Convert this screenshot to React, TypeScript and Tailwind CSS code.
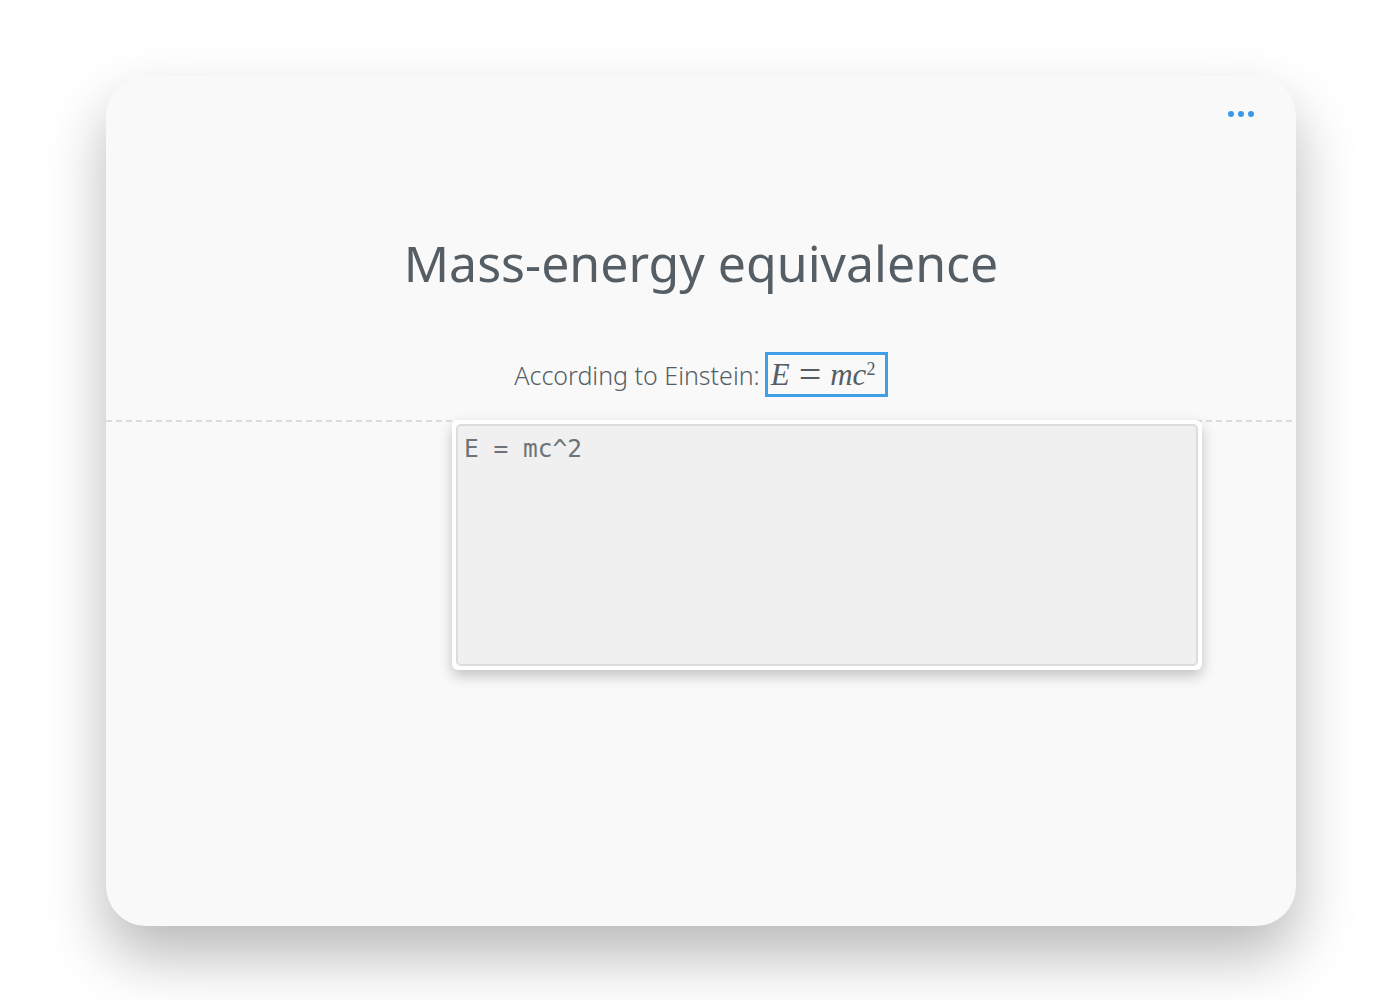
export default function App() {
  return (
    <div className="min-h-[1000px] bg-white pt-[76px]" style={{ fontFamily: '"Noto Sans", "Open Sans", sans-serif' }}>
      <div className="relative ml-[106px] h-[850px] w-[1190px] rounded-[40px] bg-[#f9f9f9] shadow-[0_30px_60px_rgba(0,0,0,0.28)]">
        {/* menu dots */}
        <button className="absolute right-[38px] top-[26px] flex h-6 items-center gap-[4px] px-1">
          <span className="h-[6px] w-[6px] rounded-full bg-[#3b99e8]" />
          <span className="h-[6px] w-[6px] rounded-full bg-[#3b99e8]" />
          <span className="h-[6px] w-[6px] rounded-full bg-[#3b99e8]" />
        </button>

        <div className="flex flex-col items-center pt-[152px]">
          <h1 className="text-[50px] font-normal leading-[70px] text-[#555e65]">Mass-energy equivalence</h1>
          <p className="mt-[54px] flex items-center text-[25px] font-light leading-[32px] text-[#555e65]">
            <span>According to Einstein:</span>
            <span
              className="ml-[5px] flex h-[45px] w-[123px] items-center border-[3px] border-[#3f9ee8] pl-[3px] text-[31px] leading-none text-[#555e65]"
              style={{ fontFamily: '"Liberation Serif", "DejaVu Serif", serif' }}
            >
              <i>E</i>
              <span className="mx-[9px] text-[40px] not-italic leading-none">=</span>
              <i>mc</i>
              <sup className="relative -top-[6px] text-[18px] not-italic">2</sup>
            </span>
          </p>
        </div>

        <div className="mt-[23px] h-[2px] bg-[repeating-linear-gradient(90deg,#dcdce0_0_6px,transparent_6px_10px)]" />

        {/* source popup */}
        <div className="absolute left-[346px] top-[344px] w-[750px] rounded-[6px] bg-white p-[4px] shadow-[0_6px_14px_rgba(0,0,0,0.22)]">
          <div
            className="h-[242px] rounded-[5px] border-2 border-[#dcdbe0] bg-[#f0f0f0] px-[6px] py-[8px] text-[24.5px] leading-[30px] text-[#6e7378]"
            style={{ fontFamily: '"DejaVu Sans Mono", "Liberation Mono", monospace' }}
          >
            E = mc^2
          </div>
        </div>
      </div>
    </div>
  );
}
